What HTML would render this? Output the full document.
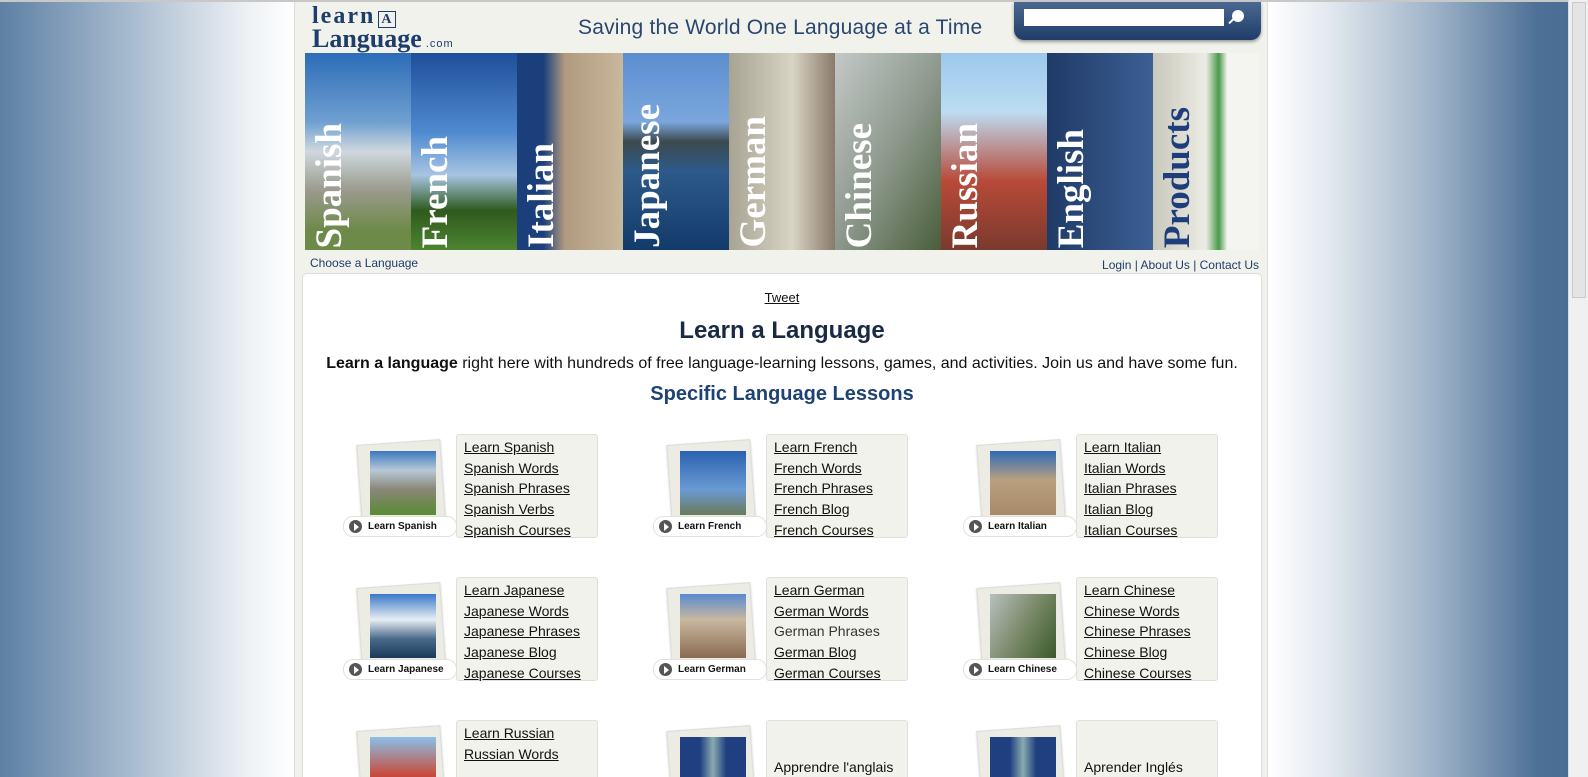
<!DOCTYPE html>
<html style="overflow:hidden;width:1588px;height:777px"><head><meta charset="utf-8"><style>
*{margin:0;padding:0;box-sizing:border-box}
body{width:1588px;height:777px;overflow:hidden;font-family:"Liberation Sans",Arial,sans-serif;position:relative;background:#fff}
#w{position:absolute;left:0;top:0;width:1588px;height:777px;overflow:hidden}
.bgl{position:absolute;left:0;top:2px;width:294px;height:775px;background:linear-gradient(90deg,#5d80a4,#a9bccf 45%,#eef2f5 85%,#fff)}
.bgr{position:absolute;left:1268px;top:2px;width:300px;height:775px;background:linear-gradient(90deg,#fff,#e3e9ef 20%,#9fb3c8 55%,#4d7096 90%,#4a6d93)}
.topl{position:absolute;left:0;top:0;width:1568px;height:2px;background:#c8c8c8}
.sb{position:absolute;left:1568px;top:0;width:20px;height:777px;background:#f0f0f0;border-left:1px solid #ddd}
.sb i{position:absolute;left:3px;top:2px;width:14px;height:296px;background:#e4e4e4;border:1px solid #c9c9c9}
.col{position:absolute;left:294px;top:2px;width:974px;height:775px;background:#f2f2ec;border-left:1px solid #ddd;border-right:1px solid #ddd}
.logo{position:absolute;left:312px;top:8px;font-family:"Liberation Serif",serif;color:#1d3d6c;font-weight:bold;line-height:17px}
.tag{position:absolute;left:578px;top:16px;font-size:21px;color:#29466e;letter-spacing:.2px}
.search{position:absolute;left:1014px;top:2px;width:247px;height:38px;background:linear-gradient(#4a6890,#1f3d68);border-radius:0 0 10px 10px;box-shadow:0 2px 3px #999}
.search .in{position:absolute;left:10px;top:7px;width:200px;height:17px;background:#fff}
.banner{position:absolute;left:305px;top:53px;width:954px;height:197px;display:flex;overflow:hidden}
.p{flex:1;position:relative;overflow:hidden}
.p span{position:absolute;left:6px;bottom:2px;writing-mode:vertical-rl;transform:rotate(180deg);font-family:"Liberation Serif",serif;font-weight:bold;font-size:37px;color:#fff;white-space:nowrap;line-height:37px}
.nav{position:absolute;top:256px;font-size:12px;color:#1d3d6c}
.box{position:absolute;left:302px;top:273px;width:960px;height:504px;background:#fff;border:1px solid #ddd;border-bottom:none;border-radius:5px 5px 0 0;overflow:hidden}
.c{position:absolute;text-align:center;left:0;width:958px}
a{color:#111;text-decoration:underline}
.card{position:absolute;width:260px;height:104px}
.ph{position:absolute;left:18px;top:8px;width:84px;height:78px;background:#ecece4;border:1px solid #ddd;transform:rotate(-4deg);box-shadow:0 1px 2px #ccc}
.img{position:absolute;left:29px;top:17px;width:66px;height:64px}
.lab{position:absolute;left:2px;top:82px;width:114px;height:21px;background:#fff;border:1px solid #e2e2dc;border-radius:10px;font-size:10px;font-weight:bold;padding:4px 0 0 24px;color:#111}
.lab:before{content:"";position:absolute;left:5px;top:3px;width:13px;height:13px;border-radius:50%;background:#555}
.lab:after{content:"";position:absolute;left:10px;top:6px;border-left:5px solid #fff;border-top:4px solid transparent;border-bottom:4px solid transparent}
.lk{position:absolute;left:115px;top:0;width:142px;height:104px;background:#f2f2ec;border:1px solid #e0e0da;border-radius:3px;padding:2px 0 0 7px;font-size:14px;line-height:20.7px}
.lk a{display:block;color:#111}
</style></head><body><div id="w">
<div class="topl"></div>
<div class="bgl"></div><div class="bgr"></div>
<div class="sb"><i></i></div>
<div class="col"></div>
<div class="logo"><div style="font-size:24px;letter-spacing:2px">learn<span style="font-size:14px;border:1px solid #1d3d6c;padding:0 2px;margin-left:3px">A</span></div><div style="font-size:26px;margin-top:2px">Language<span style="font-size:11px;font-family:'Liberation Sans';letter-spacing:1px;font-weight:normal"> .com</span></div></div>
<div class="tag">Saving the World One Language at a Time</div>
<div class="search"><div class="in"></div><div style="position:absolute;left:218px;top:8px;width:12px;height:12px;border-radius:50%;background:#fff"></div><div style="position:absolute;left:214px;top:18px;width:7px;height:2px;background:#fff;transform:rotate(-45deg)"></div></div>
<div class="banner">
<div class="p" style="background:linear-gradient(#2c6cb8,#6fa0d0 35%,#cfd8de 50%,#9a9a8c 70%,#6d8a48 90%)"><span>Spanish</span></div>
<div class="p" style="background:linear-gradient(#1e4f9a,#4f8ad0 40%,#a8c4e2 62%,#2e5a1e 80%,#4d8430)"><span>French</span></div>
<div class="p" style="background:linear-gradient(90deg,#1a3f7a 25%,#b09a80 45%,#c8b89c)"><span>Italian</span></div>
<div class="p" style="background:linear-gradient(#5c8ed0,#7aa6dc 35%,#3c4a4e 45%,#2d5a8a 60%,#123a6a)"><span>Japanese</span></div>
<div class="p" style="background:linear-gradient(90deg,#a8a494,#d8d4c4 60%,#8a7a6a)"><span>German</span></div>
<div class="p" style="background:linear-gradient(120deg,#c4c8c8,#8e9a8e 50%,#4a5e3a)"><span>Chinese</span></div>
<div class="p" style="background:linear-gradient(#9cc8ec,#bcdcf2 30%,#b84a38 65%,#7a3a2e)"><span>Russian</span></div>
<div class="p" style="background:linear-gradient(90deg,#1f3a66,#3c5f94)"><span>English</span></div>
<div class="p" style="background:linear-gradient(90deg,#c8c8bc,#ececE4 50%,#4a9a4a 62%,#f4f4f0 70%)"><span style="color:#1d3d7c">Products</span></div>
</div>
<div class="nav" style="left:310px">Choose a Language</div>
<div class="nav" style="right:329px;top:258px">Login | About Us | Contact Us</div>
<div class="box">
<div class="c" style="top:16px;font-size:13px"><a>Tweet</a></div>
<div class="c" style="top:43px;font-size:24px;font-weight:bold;color:#1a2a44">Learn a Language</div>
<div class="c" style="top:81px;font-size:16px;color:#111"><b>Learn a language</b> right here with hundreds of free language-learning lessons, games, and activities. Join us and have some fun.</div>
<div class="c" style="top:109px;font-size:20px;font-weight:bold;color:#1f4274">Specific Language Lessons</div>

<div class="card" style="left:38px;top:160px"><div class="ph"></div><div class="img" style="background:linear-gradient(#3a78c0,#b8c8d8 30%,#8a8678 60%,#5e8a3a 95%)"></div><div class="lab">Learn Spanish</div><div class="lk"><a>Learn Spanish</a><a>Spanish Words</a><a>Spanish Phrases</a><a>Spanish Verbs</a><a>Spanish Courses</a></div></div>
<div class="card" style="left:348px;top:160px"><div class="ph"></div><div class="img" style="background:linear-gradient(#2a62b0,#6a9ad4 60%,#6a7a5a)"></div><div class="lab">Learn French</div><div class="lk"><a>Learn French</a><a>French Words</a><a>French Phrases</a><a>French Blog</a><a>French Courses</a></div></div>
<div class="card" style="left:658px;top:160px"><div class="ph"></div><div class="img" style="background:linear-gradient(#2e6ab8,#b8a080 45%,#a88a68)"></div><div class="lab">Learn Italian</div><div class="lk"><a>Learn Italian</a><a>Italian Words</a><a>Italian Phrases</a><a>Italian Blog</a><a>Italian Courses</a></div></div>

<div class="card" style="left:38px;top:303px"><div class="ph"></div><div class="img" style="background:linear-gradient(#3a78c8,#e8eef4 40%,#4a6a8a 70%,#1a3a5a)"></div><div class="lab">Learn Japanese</div><div class="lk"><a>Learn Japanese</a><a>Japanese Words</a><a>Japanese Phrases</a><a>Japanese Blog</a><a>Japanese Courses</a></div></div>
<div class="card" style="left:348px;top:303px"><div class="ph"></div><div class="img" style="background:linear-gradient(#5a8ad0,#c8b8a0 40%,#8a6a50)"></div><div class="lab">Learn German</div><div class="lk"><a>Learn German</a><a>German Words</a><a style="text-decoration:none;color:#333">German Phrases</a><a>German Blog</a><a>German Courses</a></div></div>
<div class="card" style="left:658px;top:303px"><div class="ph"></div><div class="img" style="background:linear-gradient(120deg,#b8c0c0,#7a8a6a 50%,#3a5a2a)"></div><div class="lab">Learn Chinese</div><div class="lk"><a>Learn Chinese</a><a>Chinese Words</a><a>Chinese Phrases</a><a>Chinese Blog</a><a>Chinese Courses</a></div></div>

<div class="card" style="left:38px;top:446px"><div class="ph"></div><div class="img" style="background:linear-gradient(#8ac0ea,#c84a3a 60%,#2a4a9a)"></div><div class="lk"><a>Learn Russian</a><a>Russian Words</a></div></div>
<div class="card" style="left:348px;top:446px"><div class="ph"></div><div class="img" style="background:linear-gradient(90deg,#1f3f80 30%,#8aaab0 50%,#1f3f80 70%)"></div><div class="lk" style="padding-top:36px"><a style="text-decoration:none">Apprendre l'anglais</a></div></div>
<div class="card" style="left:658px;top:446px"><div class="ph"></div><div class="img" style="background:linear-gradient(90deg,#1f3f80 30%,#8aaab0 50%,#1f3f80 70%)"></div><div class="lk" style="padding-top:36px"><a style="text-decoration:none">Aprender Inglés</a></div></div>
</div>
</div></body></html>
